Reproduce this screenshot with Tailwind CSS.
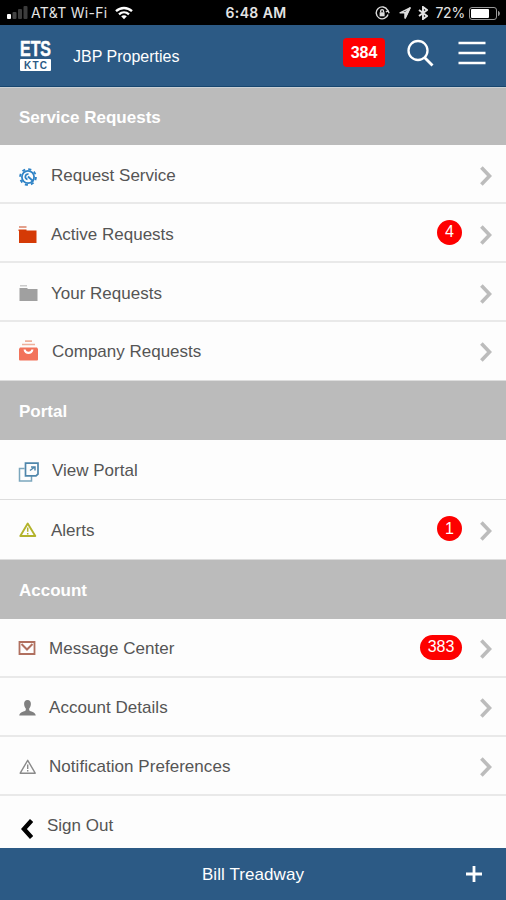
<!DOCTYPE html>
<html lang="en">
<head>
    <meta charset="UTF-8">
    <meta name="viewport" content="width=device-width, initial-scale=1.0">
    <title>JBP Properties</title>
    <script src="https://cdn.jsdelivr.net/npm/@tailwindcss/browser@4"></script>
</head>
<body class="w-[506px] h-[900px] overflow-hidden flex flex-col bg-[#fdfdfd] font-['Liberation_Sans',Arial,sans-serif] text-[17px] leading-5 text-[#555]">

    <!-- Status bar -->
    <div class="h-[25px] shrink-0 bg-black text-[#e4e4e4] grid grid-cols-[1fr_auto_1fr] items-center pl-[7px] pr-[5px] pt-[1px] font-[Inter,sans-serif] text-sm">
        <div class="flex items-center">
            <svg class="w-[21px] h-[14px] mr-[3px]" viewBox="0 0 21 14">
                <rect x="0" y="8" width="4" height="5" rx="1" fill="#fff"/>
                <rect x="5.5" y="6" width="4" height="7" rx="1" fill="#444"/>
                <rect x="11" y="3" width="4" height="10" rx="1" fill="#3c3c3c"/>
                <rect x="16.5" y="0" width="4" height="13" rx="1" fill="#3c3c3c"/>
            </svg>
            <span class="w-[84px] whitespace-nowrap text-[14px] tracking-[0.3px]">AT&amp;T Wi-Fi</span>
            <svg class="w-[18px] h-[14px]" viewBox="0 0 18 14" fill="none" stroke="#fff" stroke-width="2.3">
                <path d="M1 5.2c4.600-4.300 11.400-4.300 16 0M4 8.300c2.900-2.700 7.100-2.700 10 0"/>
                <path d="M6.200 10.200c1.700-1.300 3.900-1.300 5.600 0L9 13.200z" fill="#fff" stroke="none"/>
            </svg>
        </div>
        <span class="ml-[4px] font-semibold text-[14px] tracking-[0.4px]">6:48 AM</span>
        <div class="flex items-center justify-end">
            <svg class="w-[15px] h-[14px]" viewBox="0 0 15 14" fill="none" stroke="#ddd" stroke-width="1.400">
                <path d="M12.600 4.200A6 6 0 1 0 13 8.500M10.800 6l2.300-1.200 1 2.400"/>
                <rect x="4.600" y="6.300" width="5" height="4" fill="#ddd" stroke="none"/>
                <path d="M5.700 6.500V5a1.400 1.400 0 0 1 2.800 0v1.500"/>
            </svg>
            <svg class="w-[12px] h-[12px] ml-[9px]" viewBox="0 0 12 12" fill="none" stroke="#ddd" stroke-width="1.400" stroke-linejoin="round">
                <path d="M11 1L1 5.800h5.200V11z"/>
                <path d="M11 1L6.200 5.800V11z" fill="#ddd"/>
            </svg>
            <svg class="w-[10px] h-[14px] ml-[7px]" viewBox="0 0 10 14" fill="none" stroke="#e4e4e4" stroke-width="1.900">
                <path d="M1 4l8 6-4 3V1l4 3-8 6"/>
            </svg>
            <span class="ml-[7px] text-[14px] tracking-[-0.2px]">72%</span>
            <svg class="w-[32px] h-[13px] ml-[4px]" viewBox="0 0 32 13">
                <rect x=".5" y=".5" width="27" height="12" rx="2.500" fill="none" stroke="#999"/>
                <rect x="2" y="2" width="18" height="9" rx="1" fill="#fff"/>
                <path d="M29 4v5c2.500-.5 2.500-4.500 0-5z" fill="#999"/>
            </svg>
        </div>
    </div>

    <!-- Header -->
    <header class="h-[62px] shrink-0 bg-[#2c5a85] border-b border-[#17466f] text-white flex items-center">
        <div class="ml-[20px] w-[31px] h-[31px] flex flex-col justify-between">
            <svg class="w-[31px] h-[17px] overflow-visible" viewBox="0 0 31 17">
                <text x="0" y="15.500" textLength="31" lengthAdjust="spacingAndGlyphs" font-size="21.500" font-weight="700" fill="#fff" stroke="#fff" stroke-width=".5">ETS</text>
            </svg>
            <svg class="w-[31px] h-[12px]" viewBox="0 0 31 12">
                <rect width="31" height="12" rx="1" fill="#fff"/>
                <text x="4" y="9.500" textLength="23" font-size="10" font-weight="700" fill="#2c5a85">KTC</text>
            </svg>
        </div>
        <h1 class="ml-[22px] pt-[2px] text-[16px]">JBP Properties</h1>
        <div class="ml-auto mr-[21px] mb-[6px] w-[42px] h-[29px] rounded-[4px] bg-[#fe0000] text-white font-bold text-[16px] flex items-center justify-center">384</div>
        <svg class="w-[28px] h-[28px] mr-[24px] mb-[6px]" viewBox="0 0 28 28" fill="none" stroke="#fff" stroke-width="2.300">
            <circle cx="12" cy="11.500" r="9.500"/>
            <path d="M18.500 18.500l8 8" stroke-width="2.900"/>
        </svg>
        <svg class="w-[28px] h-[24px] mr-[20px] mb-[6px]" viewBox="0 0 28 24" stroke="#fff" stroke-width="2.300">
            <path d="M.5 2h27M.5 12h27M.5 22h27"/>
        </svg>
    </header>

    <main class="h-[761px] shrink-0 flex flex-col">
        <h2 class="h-[58px] shrink-0 bg-[#bbb] border-t border-[#cbd0d4] text-white font-bold flex items-center pl-[19px] pt-[2px]">Service Requests</h2>

        <div class="h-[59px] shrink-0 flex items-center pl-[19px] pr-[14px] pt-[4px] border-b-2 border-[#e9e9e9]">
            <svg class="w-[18px] h-[18px] mr-[14px] mt-[2px]" viewBox="0 0 18 18" fill="none" stroke="#2f83c6">
                <circle cx="9" cy="9" r="6.100" stroke-width="1.800"/>
                <circle cx="9" cy="9" r="7.900" stroke-width="1.900" stroke-dasharray="3.100 3.105"/>
                <path d="M9.500 6.200a2.600 2.600 0 1 0-1 5.200M9 8.500l5.500 5" stroke-width="1.800"/>
            </svg>
            <span>Request Service</span>
            <svg class="w-[12px] h-[20px] ml-auto" viewBox="0 0 12 20" fill="none" stroke="#bcbcbc" stroke-width="3.600"><path d="M1.400 1.500L9.500 10l-8.100 8.500"/></svg>
        </div>

        <div class="h-[59px] shrink-0 flex items-center pl-[18px] pr-[14px] pt-[4px] border-b-2 border-[#e9e9e9]">
            <svg class="w-[19px] h-[18px] mr-[14px]" viewBox="0 0 19 18">
                <rect x="1" y="0" width="7.500" height="2" fill="#e3a08c"/>
                <path d="M.5 3.500h8v1h10V17H1V5H.5z" fill="#d53a06"/>
            </svg>
            <span>Active Requests</span>
            <span class="ml-auto mr-[18px] mb-[5px] w-[25px] h-[25px] rounded-full bg-[#fe0000] text-white text-[16px] flex items-center justify-center">4</span>
            <svg class="w-[12px] h-[20px]" viewBox="0 0 12 20" fill="none" stroke="#bcbcbc" stroke-width="3.600"><path d="M1.400 1.500L9.500 10l-8.100 8.500"/></svg>
        </div>

        <div class="h-[59px] shrink-0 flex items-center pl-[19px] pr-[14px] pt-[4px] border-b-2 border-[#e9e9e9]">
            <svg class="w-[19px] h-[17px] mr-[13px]" viewBox="0 0 19 17">
                <rect x="1" y="0" width="7" height="1.500" fill="#ccc"/>
                <path d="M.5 3h8v1h10v12H.5z" fill="#a0a0a0"/>
            </svg>
            <span>Your Requests</span>
            <svg class="w-[12px] h-[20px] ml-auto" viewBox="0 0 12 20" fill="none" stroke="#bcbcbc" stroke-width="3.600"><path d="M1.400 1.500L9.500 10l-8.100 8.500"/></svg>
        </div>

        <div class="h-[59px] shrink-0 flex items-center pl-[19px] pr-[14px] pt-[2px] border-b border-[#ddd]">
            <svg class="w-[19px] h-[21px] mr-[14px] mb-[4px]" viewBox="0 0 19 21">
                <path d="M6 1.200h7M3 4.500h13" stroke="#eeb09b" stroke-width="1.700"/>
                <path d="M1 7.500h17l1 1.500v10.500a1 1 0 0 1-1 1H1a1 1 0 0 1-1-1V9z" fill="#f2735b"/>
                <path d="M4.500 9.500h2.200c.6 3 5 3 5.600 0h2.200c-.8 6-9.200 6-10 0z" fill="#fff"/>
            </svg>
            <span>Company Requests</span>
            <svg class="w-[12px] h-[20px] ml-auto" viewBox="0 0 12 20" fill="none" stroke="#bcbcbc" stroke-width="3.600"><path d="M1.400 1.500L9.500 10l-8.100 8.500"/></svg>
        </div>

        <h2 class="h-[59px] shrink-0 bg-[#bbb] text-white font-bold flex items-center pl-[19px] pt-[2px]">Portal</h2>

        <div class="h-[60px] shrink-0 flex items-center pl-[18px] pr-[14px] pt-[2px] border-b border-[#ddd]">
            <svg class="w-[21px] h-[20px] mr-[13px] mt-[2px]" viewBox="0 0 21 20" fill="none">
                <path d="M6.500 6.500h-5V19H13.500V14" stroke="#7ba6bd" stroke-width="1.500"/>
                <path d="M7.500 1.200h12.500V12l-2 1.800H7.500z" stroke="#4f86ab" stroke-width="1.700"/>
                <path d="M12 8.500l4-3M13 5h4v3.500" stroke="#4f86ab" stroke-width="1.500"/>
            </svg>
            <span>View Portal</span>
        </div>

        <div class="h-[60px] shrink-0 flex items-center pl-[19px] pr-[14px] pt-[2px] border-b border-[#ddd]">
            <svg class="w-[18px] h-[16px] mr-[14px] mb-[2px]" viewBox="0 0 18 16" fill="none" stroke="#b3b32b" stroke-width="1.900">
                <path d="M8.700 1.600L1.300 14h15z" stroke-linejoin="round"/>
                <path d="M8.700 5.500v4.300M8.700 11v1.600" stroke-width="1.500"/>
            </svg>
            <span>Alerts</span>
            <span class="ml-auto mr-[18px] mb-[4px] w-[25px] h-[25px] rounded-full bg-[#fe0000] text-white text-[16px] flex items-center justify-center">1</span>
            <svg class="w-[12px] h-[20px]" viewBox="0 0 12 20" fill="none" stroke="#bcbcbc" stroke-width="3.600"><path d="M1.400 1.500L9.500 10l-8.100 8.500"/></svg>
        </div>

        <h2 class="h-[59px] shrink-0 bg-[#bbb] text-white font-bold flex items-center pl-[19px] pt-[2px]">Account</h2>

        <div class="h-[59px] shrink-0 flex items-center pl-[18px] pr-[14px] pt-[3px] border-b-2 border-[#e9e9e9]">
            <svg class="w-[18px] h-[14px] mr-[13px] mb-[2px]" viewBox="0 0 18 14" fill="none" stroke="#b0705f" stroke-width="1.800">
                <path d="M1.500 1h15v12h-15z"/>
                <path d="M3.500 3L9 8.500 14.500 3" stroke-width="2"/>
            </svg>
            <span class="tracking-[0.06px]">Message Center</span>
            <span class="ml-auto mr-[18px] mb-[4px] w-[42px] h-[25px] rounded-full bg-[#fe0000] text-white text-[16px] flex items-center justify-center">383</span>
            <svg class="w-[12px] h-[20px]" viewBox="0 0 12 20" fill="none" stroke="#bcbcbc" stroke-width="3.600"><path d="M1.400 1.500L9.500 10l-8.100 8.500"/></svg>
        </div>

        <div class="h-[59px] shrink-0 flex items-center pl-[19px] pr-[14px] pt-[2px] border-b-2 border-[#e9e9e9]">
            <svg class="w-[17px] h-[16px] mr-[13px]" viewBox="0 0 17 16" fill="#808080">
                <path d="M8.500 0c2.400 0 3.500 1.700 3.400 4-.1 2.200-.9 3.500-1.700 4.400v1.800c1.200 1.400 6 1.600 6.600 5.300H.2c.6-3.700 5.400-3.900 6.600-5.300V8.400C6 7.500 5.200 6.200 5.100 4 5 1.700 6.100 0 8.500 0z"/>
            </svg>
            <span class="tracking-[0.04px]">Account Details</span>
            <svg class="w-[12px] h-[20px] ml-auto" viewBox="0 0 12 20" fill="none" stroke="#bcbcbc" stroke-width="3.600"><path d="M1.400 1.500L9.500 10l-8.100 8.500"/></svg>
        </div>

        <div class="h-[59px] shrink-0 flex items-center pl-[19px] pr-[14px] pt-[2px] border-b-2 border-[#e9e9e9]">
            <svg class="w-[17px] h-[16px] mr-[13px]" viewBox="0 0 17 16" fill="none" stroke="#8a8a8a" stroke-width="1.400">
                <path d="M8.700 1.300L1.200 14.200h15z" stroke-linejoin="round"/>
                <path d="M8.700 5.500v4.500M8.700 11v1.600"/>
            </svg>
            <span class="tracking-[0.04px]">Notification Preferences</span>
            <svg class="w-[12px] h-[20px] ml-auto" viewBox="0 0 12 20" fill="none" stroke="#bcbcbc" stroke-width="3.600"><path d="M1.400 1.500L9.500 10l-8.100 8.500"/></svg>
        </div>

        <div class="h-[53px] shrink-0 flex items-center pl-[21px] pt-[6px]">
            <svg class="w-[12px] h-[20px] mr-[14px] mt-[7px]" viewBox="0 0 12 20" fill="none" stroke="#000" stroke-width="4.400"><path d="M10.600 1.500L2.900 10l7.700 8.500"/></svg>
            <span>Sign Out</span>
        </div>
    </main>

    <!-- Footer -->
    <footer class="h-[52px] shrink-0 bg-[#2c5a85] text-white grid grid-cols-[1fr_auto_1fr] items-center">
        <span class="col-start-2 pt-[1px] tracking-[0.08px]">Bill Treadway</span>
        <svg class="w-[16px] h-[16px] justify-self-end mr-[24px]" viewBox="0 0 16 16" stroke="#fff" stroke-width="2.800"><path d="M0 8h16M8 0v16"/></svg>
    </footer>
</body>
</html>
